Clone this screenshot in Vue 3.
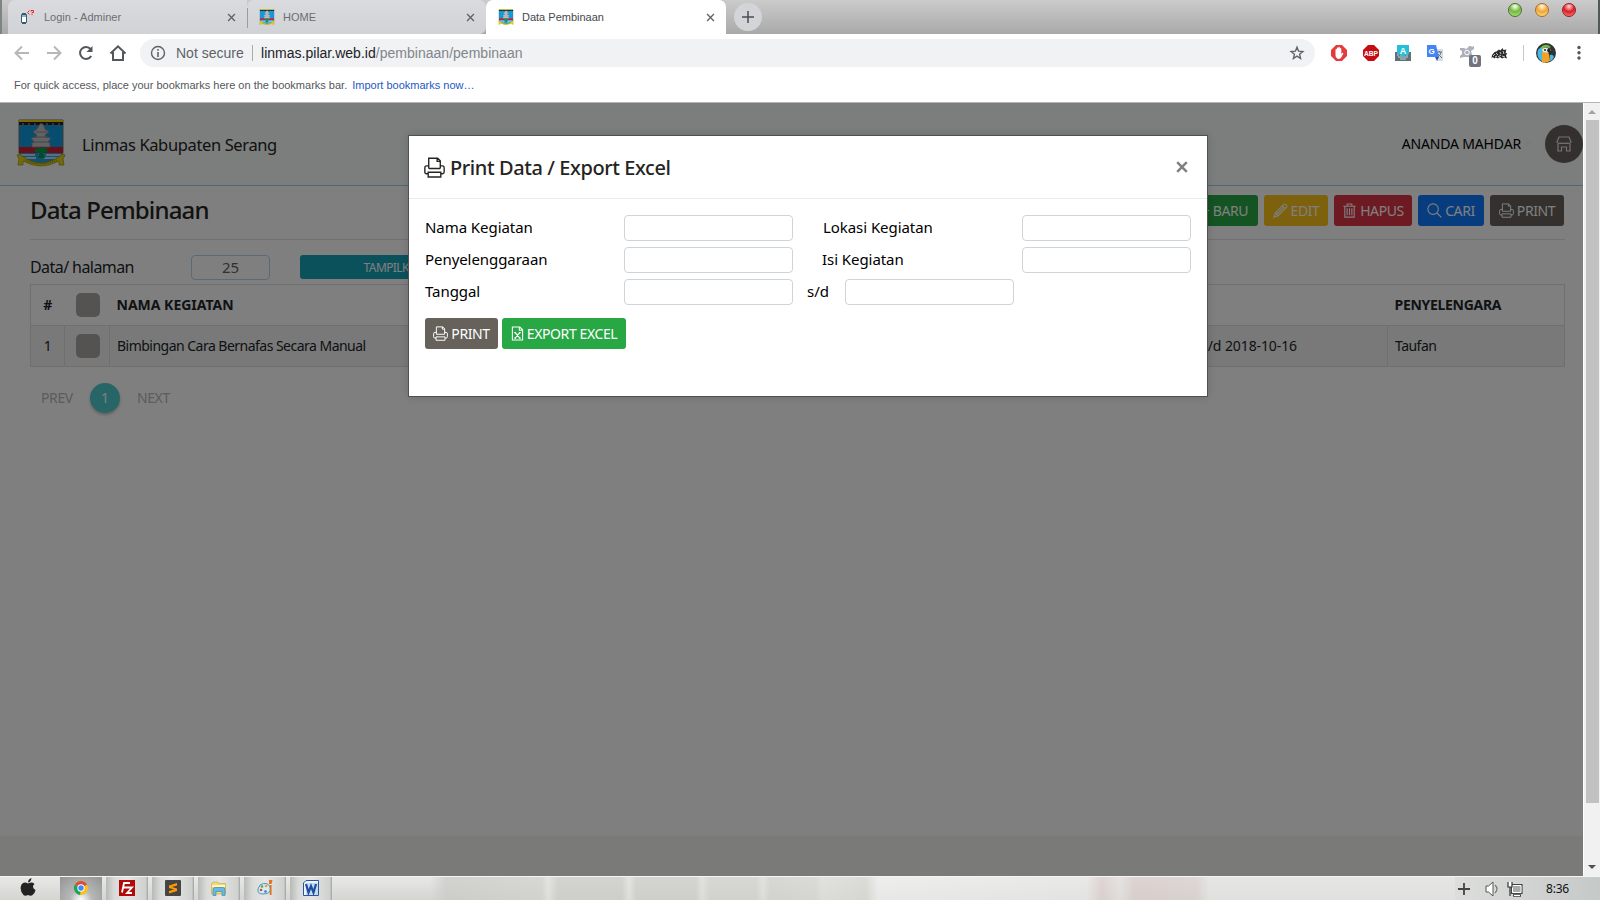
<script setup>
const tabs = [
  { title: 'Login - Adminer', kind: 'adminer' },
  { title: 'HOME', kind: 'crest' },
  { title: 'Data Pembinaan', kind: 'crest', active: true },
]
const actions = [
  { label: 'BARU', kind: 'baru', icon: 'add' },
  { label: 'EDIT', kind: 'edit', icon: 'pencil' },
  { label: 'HAPUS', kind: 'hapus', icon: 'trash' },
  { label: 'CARI', kind: 'cari', icon: 'search' },
  { label: 'PRINT', kind: 'print', icon: 'printer' },
]
const apps = ['chrome', 'filezilla', 'sublime', 'folder', 'paint', 'word']
</script>

<template>
  <div class="screen">
    <svg class="defs" width="0" height="0" aria-hidden="true">
      <symbol id="crest" viewBox="0 0 50 48" preserveAspectRatio="none">
        <path d="M3 1H47V34Q40 45 25 45Q10 45 3 34Z" fill="#0e9be0" stroke="#777" />
        <path d="M3 28H47V34H3Z" fill="#d01f2e" />
        <path d="M3 34H47Q44 40 36 43H14Q6 40 3 34Z" fill="#2a9fe0" />
        <path d="M5 36h14M30 36h15M8 39h12M28 39h14" stroke="#e8f4ff" stroke-width="1.4" />
        <path d="M3 1H47V3H3Z" fill="#e8d800" />
        <path d="M3 3H47V6H3Z" fill="#222" />
        <path d="M6 5h38" stroke="#f05060" stroke-width="1.5" stroke-dasharray="2 4" />
        <path d="M24 5h3l2 5 4 3-4 3 1 2 5 1-3 4 2 1v4H16v-4l2-1-3-4 5-1 1-2-4-3 4-3Z" fill="#c4c2c6" stroke="#8b8890" stroke-width=".8" />
        <path d="M18 18h14M18 23h15M20 13h11" stroke="#8b8890" />
        <path d="M18 33q2-5 7-4q6-2 7 4l-5 1 2 5h-7l2-5Z" fill="#079a4c" />
        <path d="M1 36q3-2 5 1Q15 44 25 44T44 37q3-3 5-1l-2 4 1 6h-5v-4Q34 47 25 47T7 42v4H2l1-6Z" fill="#e6d614" stroke="#9a8c10" stroke-width=".7" />
        <path d="M9 41Q24 49 41 41" fill="none" stroke="#776b10" stroke-width="1" stroke-dasharray="1 1" />
      </symbol>
      <symbol id="printer" viewBox="0 0 20 20">
        <path d="M4.500 11V1.200H13L15.500 3.700V11M12.500 1.200V4.200H15.500M4 16H2.500Q.8 16 .8 14.300V10.500Q.8 8.500 2.500 8.500H4.500M15.500 8.500H17.500Q19.200 8.500 19.200 10.500V14.300Q19.200 16 17.500 16H16M4.500 11H15.500M4 14.500H16V19H4Z" fill="none" stroke="currentColor" stroke-width="1.300" />
      </symbol>
      <symbol id="pencil" viewBox="0 0 16 16">
        <path d="M1 15 2.500 10.500 11.500 1.500Q12.500 .6 13.500 1.500L14.500 2.500Q15.400 3.500 14.500 4.500L5.500 13.500ZM2.500 10.500l3 3M10 3l3 3M4 12 11.500 4.500" fill="none" stroke="currentColor" stroke-width="1.200" />
      </symbol>
      <symbol id="trash" viewBox="0 0 16 16">
        <path d="M1.500 3.500h13M5.500 3V1h5v2M3 3.500V15h10V3.500M5.500 5.500v7.500M8 5.500v7.500M10.500 5.500v7.500" fill="none" stroke="currentColor" stroke-width="1.200" />
      </symbol>
      <symbol id="search" viewBox="0 0 16 16">
        <circle cx="6.500" cy="6.500" r="5.600" fill="none" stroke="currentColor" stroke-width="1.200" />
        <path d="M10.500 10.500 15.300 15.300" stroke="currentColor" stroke-width="1.400" />
      </symbol>
      <symbol id="plus" viewBox="0 0 16 16">
        <path d="M8 2v12M2 8h12" stroke="currentColor" stroke-width="1.500" />
      </symbol>
      <symbol id="add" viewBox="0 0 16 16">
        <path d="M8 1v14M1 8h14" stroke="currentColor" stroke-width="1.300" />
      </symbol>
      <symbol id="close" viewBox="0 0 10 10">
        <path d="M1.200 1.200 8.800 8.800M8.800 1.200 1.200 8.800" stroke="currentColor" stroke-width="1.500" />
      </symbol>
    </svg>

    <div class="tabstrip">
      <div v-for="(t, i) in tabs" :key="i" class="tab" :class="{ active: t.active, first: i === 0 }">
        <svg v-if="t.kind === 'adminer'" class="favicon" viewBox="0 0 16 16">
          <path d="M1.500 5.500h5v8h-5Z" fill="#fff" stroke="#315f75" />
          <path d="M2 4.500h4M2 7h4M2 14.500h4" stroke="#315f75" />
          <path d="M9.500 1.500 7.500 3.500l2 2M11 2.500V1.500h2.500v2h-1.500v1M12 5.200v1" fill="none" stroke="#e22" />
        </svg>
        <svg v-else class="favicon"><use href="#crest" /></svg>
        <span class="tabtitle">{{ t.title }}</span>
        <svg class="tabclose"><use href="#close" /></svg>
      </div>
      <div class="newtab"><svg><use href="#plus" /></svg></div>
      <div class="lights"><i class="green"></i><i class="amber"></i><i class="red"></i></div>
    </div>

    <div class="toolbar">
      <svg class="nav dim" viewBox="0 0 16 16"><path d="M15 8H2M8 1.500 1.500 8 8 14.500" /></svg>
      <svg class="nav dim" viewBox="0 0 16 16"><path d="M1 8h13M8 1.500 14.500 8 8 14.500" /></svg>
      <svg class="nav" viewBox="0 0 16 16"><path d="M13.200 11A6 6 0 1 1 12.600 4" /><path d="M14.500 1v6h-6Z" class="solid" /></svg>
      <svg class="nav" viewBox="0 0 16 16"><path d="M.5 8.500 8 1.300 15.500 8.500M3 7v8h10V7" /></svg>
      <div class="omnibox">
        <svg class="info" viewBox="0 0 16 16"><circle cx="8" cy="8" r="6.500" fill="none" stroke="currentColor" stroke-width="1.400" /><path d="M8 7v5M8 4v1.700" stroke="currentColor" stroke-width="1.600" /></svg>
        <span class="notsecure">Not secure</span>
        <span class="bar"></span>
        <span class="url"><b>linmas.pilar.web.id</b>/pembinaan/pembinaan</span>
        <svg class="star" viewBox="0 0 16 16"><path d="M8 2.200 9.600 6.200l4.300.3-3.300 2.800 1 4.200L8 11.200l-3.600 2.300 1-4.200L2.100 6.500 6.400 6.200Z" fill="none" stroke="currentColor" stroke-width="1.400" /></svg>
      </div>
      <div class="extensions">
        <svg viewBox="0 0 16 16"><path d="M5 0h6l5 5v6l-5 5H5l-5-5V5Z" fill="#e33c3c" /><path d="M4.500 8V4.500q.7-1 1.300 0V3q.7-1 1.500 0V2.300q.7-1 1.500 0V3.500q.7-1 1.500 0V9l1-1q1-.5 1 .5L10.500 12Q9.500 14 7.500 14 4.500 13 4.500 10Z" fill="#fff" /></svg>
        <svg viewBox="0 0 16 16"><path d="M5 0h6l5 5v6l-5 5H5l-5-5V5Z" fill="#c80d12" /><text x="1" y="10.700" font-size="7.500" font-weight="700" fill="#fff" textLength="14" lengthAdjust="spacingAndGlyphs">ABP</text></svg>
        <svg viewBox="0 0 16 16"><path d="M0 7h16v9H0Z" fill="#607078" /><path d="M2 10h2m1 0h2m4 0h2M3 12h10M5 14h6" stroke="#c5d3d9" /><path d="M2 0h12v9l-3 1-3 2-2-2-4-1Z" fill="#25bfd8" /><text x="8" y="8.500" text-anchor="middle" font-size="9" font-weight="700" fill="#fff">A</text></svg>
        <svg viewBox="0 0 16 16"><path d="M6 4h10v12h-6Z" fill="#dadce0" /><path d="M0 0h9l3 12H0Z" fill="#4285f4" /><path d="m8 12h4l-2 4Z" fill="#2855c8" /><text x="1.500" y="9" font-size="8" font-weight="700" fill="#fff">G</text><path d="M10 7h5M12.500 6v1M14 7q0 3-3 5M11 9l4 4" stroke="#5a7890" fill="none" /></svg>
        <span class="counter"><svg viewBox="0 0 16 16"><path d="M1 3h4l2 1q2-1 3-3h2l1 1 2-1v3l-3 2 1 4-2 2H5l-4 1v-2l2-2V6L1 5Z" fill="#b0b0ba" /><circle cx="8" cy="7.500" r="2.300" fill="none" stroke="#fff" /></svg><em>0</em></span>
        <svg viewBox="0 0 16 16"><path d="M.5 13 1 10l2.500-3 2-.5L8 4.500l1.500 1 2-2.500 1 2 3-.5-1 3 1.500 1-1 2 1 3-3-1-2 1-2-1.500-2 1.500-2-1-2 1-1-1.500Z" fill="#2b2b2b" /><path d="M2 11l2-2M5 8l2 2M9 7l1 2M12 6l1 3M7 12l3-2M11 11l3 1M4 12l2-1" stroke="#eee" stroke-width=".8" /></svg>
      </div>
      <span class="toolsep"></span>
      <svg class="avatar" viewBox="0 0 20 20"><circle cx="10" cy="10" r="10" fill="#303438" /><path d="M4 5Q9-1 15 4L13 5Q8 3 5 8Z" fill="#77b84b" /><path d="M1.500 12Q1 4 6 5l2 5 2 9.500Q3 19 1.500 12Z" fill="#4ab9e2" /><path d="M6 9q5-1 7 2l1 7q-5 3-8 1Z" fill="#f0a329" /><path d="M14 12q3-1 4 2-1 3-4 4Z" fill="#4ab9e2" /><path d="M6 6q5-3 9 1l-2 3-6-1Z" fill="#e9e9dc" /><path d="M12 5q4 1 2 6l-3-3Z" fill="#222" /><circle cx="9" cy="7" r="1" fill="#222" /></svg>
      <svg class="kebab" viewBox="0 0 4 16"><circle cx="2" cy="2.500" r="1.700" /><circle cx="2" cy="7.700" r="1.700" /><circle cx="2" cy="13" r="1.700" /></svg>
    </div>
    <div class="bookmarks"><span>For quick access, place your bookmarks here on the bookmarks bar.</span><a>Import bookmarks now…</a></div>

    <div class="viewport">
      <main class="page">
        <header class="masthead">
          <svg class="logo"><use href="#crest" /></svg>
          <span class="brand">Linmas Kabupaten Serang</span>
          <span class="user">ANANDA MAHDAR</span>
          <span class="caret"></span>
          <span class="shop"><svg viewBox="0 0 16 16"><path d="M3 1h10l2 5q-1 2-3 1-1 1-2.500 0Q8 8 6.500 7 5 8 4 7 2 8 1 6ZM2 8v7h3.500v-4h5v4H14V8" fill="none" stroke="currentColor" stroke-width="1.200" /></svg></span>
        </header>
        <section class="content">
          <div class="titlerow">
            <h2>Data Pembinaan</h2>
            <div class="actions">
              <button v-for="a in actions" :key="a.kind" class="btn" :class="a.kind"><svg><use :href="'#' + a.icon" /></svg><span>{{ a.label }}</span></button>
            </div>
          </div>
          <div class="filter"><span class="filterlabel">Data/ halaman</span><span class="count">25</span><button class="show">TAMPILKAN</button></div>
          <table>
            <colgroup><col class="c1" /><col class="c2" /><col class="c3" /><col class="c4" /><col /></colgroup>
            <thead><tr><th class="num">#</th><th class="chk"><i></i></th><th class="nama">NAMA KEGIATAN</th><th></th><th class="pen">PENYELENGARA</th></tr></thead>
            <tbody><tr><td class="num">1</td><td class="chk"><i></i></td><td class="nama">Bimbingan Cara Bernafas Secara Manual</td><td class="dates">2018-10-15 s/d 2018-10-16</td><td class="pen">Taufan</td></tr></tbody>
          </table>
          <nav class="pager"><span class="prev">PREV</span><b>1</b><span class="next">NEXT</span></nav>
        </section>
        <footer></footer>
      </main>
      <div class="scrollbar"><i class="up"></i><div class="thumb"></div><i class="down"></i></div>
      <div class="shade">
        <div class="modal">
          <div class="modalhead"><svg><use href="#printer" /></svg><h4>Print Data / Export Excel</h4><svg class="x" viewBox="0 0 12 12"><path d="m1.200 1.200 9.600 9.600M10.800 1.200 1.200 10.800" stroke="currentColor" stroke-width="2.500" /></svg></div>
          <div class="form">
            <label class="l1">Nama Kegiatan</label><input /><label class="r r1">Lokasi Kegiatan</label><input />
            <label class="l2">Penyelenggaraan</label><input /><label class="r r2">Isi Kegiatan</label><input />
          </div>
          <div class="form dateform"><label class="l3">Tanggal</label><input /><label class="sd">s/d</label><input /></div>
          <div class="modalbtns">
            <button class="btn print"><svg><use href="#printer" /></svg><span>PRINT</span></button>
            <button class="btn excel"><svg viewBox="0 0 14 16"><path d="M1.500 1h8L12.500 4v11h-11ZM9 1v3.500h3.500M4.500 7l5 6M9.500 7l-5 6M3.500 7h2m3 0h2m-7 6h2m3 0h2" fill="none" stroke="currentColor" stroke-width="1.200" /></svg><span>EXPORT EXCEL</span></button>
          </div>
        </div>
      </div>
    </div>

    <div class="taskbar">
      <div class="start"><svg viewBox="0 0 16 18"><path d="M11.500 0Q8 1 8 4.500 11 4 11.500 0M8 5.500Q4 3 1.500 6.500-1 12 3.500 17 5 18.500 8 17q3 1.500 4.500 0Q15 15 15.500 12 11 9 14.500 6 12 3.500 8 5.500" fill="#222" /></svg></div>
      <div v-for="(a, i) in apps" :key="a" class="app" :class="{ on: i === 0 }">
        <svg v-if="a === 'chrome'" viewBox="0 0 16 16"><circle cx="8" cy="8" r="7" fill="#fbc116" /><path d="M8 8 1.900 4.500A7 7 0 0 1 14.100 4.500Z" fill="#dd4b3e" /><path d="M8 8 1.900 4.500A7 7 0 0 0 7 15Z" fill="#1da261" /><circle cx="8" cy="8" r="3.700" fill="#fff" /><circle cx="8" cy="8" r="2.700" fill="#4688f1" /></svg>
        <svg v-if="a === 'filezilla'" viewBox="0 0 16 16"><path d="M0 0h16v16H0Z" fill="#b30909" /><path d="M3 12.500 5 3h6M4 7.500h5M8 7.500h5L8 13h5" fill="none" stroke="#fff" stroke-width="1.800" /></svg>
        <svg v-if="a === 'sublime'" viewBox="0 0 16 16"><rect width="16" height="16" rx="1" fill="#454545" /><path d="m4 5.500 8-2.500v2.500L7 7l5 1.500v2.500L4 13.500V11l5-1.500L4 8Z" fill="#ff9800" /></svg>
        <svg v-if="a === 'folder'" viewBox="0 0 16 16"><path d="M.5 4 2 2h5l1 1.500h6.500V14H.5Z" fill="#eed879" stroke="#c9ad4b" stroke-width=".7" /><path d="M1 6h13" stroke="#fff6be" stroke-width="2" /><path d="M2 15.500V9.500q0-2 2-2h8q2 0 2 2v6h-3v-4H5v4Z" fill="#65b9e4" stroke="#367fac" stroke-width=".6" /></svg>
        <svg v-if="a === 'paint'" viewBox="0 0 16 16"><path d="M3 5Q10 1 13 7q2 7-7 7Q0 14 1 9Z" fill="#d8eaf4" stroke="#4e93bd" /><circle cx="5" cy="6.500" r="1.300" fill="#58a944" /><circle cx="9" cy="6" r="1.300" fill="#e2a82e" /><circle cx="4" cy="10" r="1.300" fill="#d54c36" /><circle cx="8.500" cy="11.500" r="1.300" fill="#357fc9" /><path d="m12 4 0-4h3.500l-1 4ZM12.800 5h1.800v10h-1.800Z" fill="#e27522" /></svg>
        <svg v-if="a === 'word'" viewBox="0 0 16 16"><path d="M3 .5h12.500v15H.5V3Z" fill="#edf4ff" stroke="#2b579a" /><path d="M3 3h12v12H3Z" fill="#c6daf5" /><path d="m3 4 2.500 8.500L8 6l2.500 6.500L13 4" fill="none" stroke="#1b4fa0" stroke-width="2.200" /></svg>
      </div>
      <div class="blur"></div>
      <div class="tray">
        <svg class="tplus" viewBox="0 0 12 12"><path d="M6 0v12M0 6h12" stroke="#444" stroke-width="1.800" /></svg>
        <svg class="speaker" viewBox="0 0 14 16"><path d="M1 5h2.500L8 1v14l-4.500-4H1Z" fill="#fff" stroke="#555" /><path d="M10 4q4 4 0 8" fill="none" stroke="#777" stroke-width="1.200" /></svg>
        <svg class="monitor" viewBox="0 0 16 16"><path d="M4.500 3.500H15v9H4.500Z" fill="#aaa" stroke="#444" stroke-width="1.200" /><path d="M5.500 4.500H14v7H5.500Z" fill="none" stroke="#fff" /><path d="M6 14.500h8" stroke="#444" stroke-width="2.500" /><path d="M7 14.500h6" stroke="#fff" /><path d="M1 1v5h4V1M3 6v9" fill="#fff" stroke="#333" stroke-width="1.200" /></svg>
        <span>8:36</span>
      </div>
    </div>
  </div>
</template>

<style>
body { overflow: hidden; }
</style>
<style scoped>
* { box-sizing: border-box; }
.screen { width: 1600px; height: 900px; display: flex; flex-direction: column; overflow: hidden; font-family: "Noto Sans", "Open Sans", sans-serif; background: #fff; }
.defs { position: absolute; }
svg { display: block; flex: none; }
.tabstrip { height: 34px; flex: none; display: flex; background: linear-gradient(#cbcbcb, #a9a9a9); padding-left: 8px; border-right: 2px solid #4d5a58; font-family: "Liberation Sans", Arial, sans-serif; position: relative; }
.tabstrip::before { content: ""; position: absolute; left: 0; top: 0; width: 2px; height: 34px; background: #7b8584; }
.tab { width: 239px; height: 34px; display: flex; align-items: center; padding: 0 11px 0 12px; background: linear-gradient(#dadbdf, #d1d2d6); color: #6c6e72; font-size: 11px; border-radius: 7px 7px 0 0; }
.tab:nth-child(2) { border-radius: 7px 7px 7px 0; }
.tab.first { border-radius: 7px 0 0 0; position: relative; }
.tab.first::after { content: ""; position: absolute; right: -1px; top: 8px; width: 1px; height: 20px; background: #9b9ca0; }
.tab.active { width: 240px; background: #fff; color: #45484c; }
.favicon { width: 16px; height: 16px; }
.tabtitle { margin-left: 8px; flex: 1; }
.tabclose { width: 9px; height: 9px; color: #5f6368; }
.newtab { width: 28px; height: 28px; margin: 3px 0 0 8px; border-radius: 50%; background: #d3d4d8; display: grid; place-items: center; color: #4a4d51; }
.newtab svg { width: 16px; height: 16px; }
.lights { margin: 3px 22px 0 auto; display: flex; gap: 13px; }
.lights i { width: 14px; height: 14px; border-radius: 50%; border: 1px solid #476f32; background: radial-gradient(circle at 50% 20%, #effbdc 5%, #72b941 48%, #b0e577 90%); }
.lights .amber { border-color: #a66b2b; background: radial-gradient(circle at 50% 20%, #fff0c8 5%, #f2a33b 48%, #ffe36e 90%); }
.lights .red { border-color: #981a20; background: radial-gradient(circle at 50% 20%, #ffc4c4 5%, #d81d26 48%, #ff7a70 90%); }

.toolbar { height: 36px; flex: none; display: flex; align-items: center; padding: 2px 0 0 14px; font-family: "Liberation Sans", Arial, sans-serif; }
.nav { width: 16px; height: 16px; margin-right: 16px; fill: none; stroke: #53575b; stroke-width: 2; overflow: visible; }
.nav.dim { stroke: #b5b7b9; }
.nav .solid { fill: #53575b; stroke: none; }
.omnibox { width: 1175px; height: 28px; margin-left: -2px; border-radius: 14px; background: #f0f2f4; display: flex; align-items: center; padding: 0 10px 0 10px; color: #5f6368; font-size: 14px; }
.info { width: 16px; height: 16px; }
.notsecure { margin-left: 10px; width: 68px; }
.bar { width: 1px; height: 16px; background: #a9abae; margin: 0 8px; }
.url { color: #80868b; flex: 1; letter-spacing: .02px; }
.url b { color: #202124; font-weight: 400; }
.star { width: 16px; height: 16px; }
.extensions { display: flex; gap: 16px; margin-left: 16px; }
.extensions svg { width: 16px; height: 16px; }
.counter { position: relative; width: 16px; }
.counter em { position: absolute; left: 10px; top: 10px; width: 12px; height: 12px; border-radius: 2px; background: #6f7380; color: #fff; font: 700 10px/12px "Liberation Sans", sans-serif; text-align: center; }
.toolsep { width: 1px; height: 16px; background: #c6c8ca; margin: 0 12px 0 16px; }
.avatar { width: 20px; height: 20px; }
.kebab { width: 4px; height: 16px; fill: #53575b; margin-left: 21px; }
.bookmarks { height: 33px; flex: none; border-bottom: 1px solid #b5b5b5; display: flex; gap: 5px; align-items: center; padding: 0 0 2px 14px; font: 11px "Liberation Sans", Arial, sans-serif; color: #53575b; }
.bookmarks a { color: #2458c5; }

.viewport { height: 773px; flex: none; display: flex; position: relative; }
.page { width: 1583px; background: #fff; display: flex; flex-direction: column; color: #212529; }
.masthead { height: 83px; flex: none; background: #f8fbfa; border-bottom: 1px solid #9bd0f2; display: flex; align-items: center; padding: 0 0 1px 16px; }
.logo { width: 50px; height: 48px; margin-bottom: 1px; }
.brand { margin-left: 16px; font-size: 16.5px; letter-spacing: -.37px; color: #252422; flex: 1; padding-top: 1px; }
.user { font-size: 14px; letter-spacing: -.15px; color: #000; }
.caret { margin: 0 14px 0 4px; border: 3px solid transparent; border-top-color: #f0f2f1; border-bottom: 0; }
.shop { width: 38px; height: 38px; border-radius: 50%; background: #66615b; color: #e4e4e4; display: grid; place-items: center; }
.shop svg { width: 16px; height: 16px; }
.content { flex: 1; padding: 9px 18px 0 30px; }
.titlerow { height: 45px; display: flex; justify-content: space-between; border-bottom: 1px solid #e2e2e2; }
h2 { margin: 0; font-size: 24px; font-weight: 500; line-height: 30px; letter-spacing: -.85px; color: #252422; }
.actions { display: flex; gap: 6px; padding-right: 1px; }
.btn { height: 31px; border: 0; border-radius: 3px; padding: 0 8px; color: #fff; font: 14px "Noto Sans", sans-serif; display: flex; align-items: center; justify-content: center; gap: 3px; white-space: nowrap; letter-spacing: -.4px; }
.btn svg { width: 15px; height: 15px; }
.baru { width: 73px; background: #28a745; }
.edit { width: 64px; background: #fbc21a; }
.hapus { width: 78px; background: #dc3545; }
.cari { width: 66px; background: #0f7bff; }
.print { width: 74px; background: #66615b; }
.filter { display: flex; padding-top: 15px; height: 44px; align-items: flex-start; }
.filterlabel { width: 161px; font-size: 16px; line-height: 25px; letter-spacing: -.57px; }
.count { width: 79px; height: 25px; border: 1px solid #b8d3f3; border-radius: 4px; text-align: center; color: #66615b; font-size: 15px; line-height: 23px; }
.show { margin-left: 30px; width: 188px; height: 24px; border: 0; border-radius: 3px; background: #17a2b8; color: #fff; font: 12px "Noto Sans", sans-serif; letter-spacing: -.6px; }
table { width: 1535px; height: 83px; border-collapse: collapse; table-layout: fixed; border: 1px solid #dedede; font-size: 14px; line-height: 20px; }
.c1 { width: 34px; } .c2 { width: 45px; } .c3 { width: 860px; } .c4 { width: 418px; }
th, td { padding: 0 7px 1px; height: 41px; text-align: left; white-space: nowrap; border-top: 1px solid #dedede; }
td { border-left: 1px solid #dedede; background: #f2f2f2; letter-spacing: -.52px; }
th { font-weight: 700; letter-spacing: 0; }
th.pen { letter-spacing: -.3px; }
.num { text-align: center; padding: 0 0 1px; }
.chk { padding: 0 0 0 11px; }
.chk i { display: block; width: 24px; height: 24px; border-radius: 5px; background: #a9a7a3; }
.dates { padding-left: 0; text-align: right; padding-right: 90px; letter-spacing: -.1px; }
.pager { display: flex; align-items: center; padding: 16px 0 0 11px; font-size: 14px; color: #b8b8b8; }
.pager span { letter-spacing: -.4px; padding-bottom: 1px; }
.pager .prev { width: 49px; }
.pager b { width: 30px; height: 30px; line-height: 29px; border-radius: 50%; text-align: center; font-weight: 400; color: #fff; background: #51cbce; box-shadow: 0 2px 3px rgba(0,0,0,.25); }
.pager .next { margin-left: 17px; }
footer { height: 40px; background: #f4f4f0; }
.shade { position: absolute; left: 0; top: 0; width: 1583px; height: 773px; background: rgba(0,0,0,.5); display: flex; justify-content: center; align-items: flex-start; padding: 32px 0 0 33px; }
.modal { width: 800px; height: 262px; background: #fff; border: 1px solid #505050; box-shadow: 0 0 8px rgba(0,0,0,.15); color: #000; }
.modalhead { height: 63px; border-bottom: 1px solid #e9ecef; display: flex; align-items: center; padding: 0 19px 0 15px; color: #252422; }
.modalhead svg { width: 21px; height: 21px; }
h4 { margin: 0 auto 0 5px; font-size: 20px; font-weight: 500; letter-spacing: -.42px; }
.modalhead .x { width: 12px; height: 12px; color: #808080; margin-bottom: 1px; }
.form { display: grid; grid-template-columns: 199px 169px 229px 169px; row-gap: 6px; padding: 16px 0 0 16px; font-size: 15px; line-height: 25px; letter-spacing: -.06px; }
.form input { width: 169px; height: 26px; margin: 0; border: 1px solid #ced4da; border-radius: 4px; background: #fff; }
.r { padding-left: 30px; }
.r2 { padding-left: 29px; }
.dateform { grid-template-columns: 199px 169px 52px 169px; padding-top: 6px; }
.sd { padding-left: 14px; }
.modalbtns { display: flex; gap: 4px; padding: 13px 0 0 16px; }
.modalbtns .print { width: 73px; }
.excel { width: 124px; background: #28a745; }
.modalbtns .excel svg { width: 13px; }

.scrollbar { width: 17px; height: 773px; background: #f1f1f1; display: flex; flex-direction: column; align-items: center; border-left: 1px solid #fff; }
.scrollbar i { border: 4px solid transparent; }
.up { margin-top: 3px; border-bottom-color: #a3a3a3 !important; }
.thumb { width: 13px; height: 683px; margin-top: 6px; background: #c1c1c1; }
.down { margin-top: 62px; border-top-color: #505050 !important; }

.taskbar { height: 24px; flex: none; display: flex; border-top: 1px solid #f5f5f5; background: linear-gradient(#e8e9e6, #d4d5d1); }
.start { width: 60px; padding: 1px 0 0 20px; }
.start svg { width: 16px; height: 18px; }
.app { width: 42px; margin-right: 4px; display: flex; justify-content: center; padding-top: 3px; background: linear-gradient(90deg, #b7bab7, #d9dbd8 20%, #e5e6e4 50%, #cfd1ce 95%, #9fa19e); }
.app.on { background: radial-gradient(circle at 50% 100%, #fff, #b7b9b8 35%, #929493); }
.app svg { width: 16px; height: 16px; }
.blur { flex: 1; background: linear-gradient(90deg, transparent 94px, #c9cac6 110px, #d0d1cd 206px, #e3e4e0 212px, #cbccc8 222px, #cbccc8 286px, #e3e4e0 293px, #cccdc8 300px, #cccdc8 360px, #e0e1dd 366px, #d0d0cc 374px, #d0d0cc 420px, #e0e1dd 427px, #d0d0cc 434px, #d5d5d1 480px, #dedfdb 486px, #d6d5d1 530px, #f0f0f0 542px, #e9eae8 750px, #dccccb 766px, #e3e1df 784px, #d9cbc9 798px, #dacfcd 860px, #e5e6e3 874px); opacity: .7; }
.tray { width: 145px; display: flex; align-items: center; background: linear-gradient(90deg, #dddedc, #c5c9c8); }
.tplus { width: 12px; height: 12px; margin-left: 3px; }
.speaker { width: 14px; height: 16px; margin-left: 15px; }
.monitor { width: 16px; height: 16px; margin-left: 8px; }
.tray span { font-size: 12px; margin-left: 23px; color: #111; letter-spacing: -.2px; }
</style>
